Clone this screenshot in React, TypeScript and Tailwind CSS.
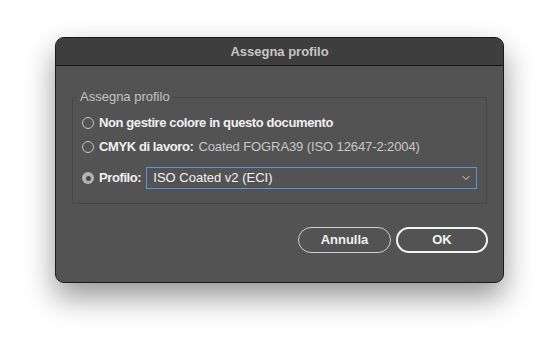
import { ChevronDown } from 'lucide-react';

function Radio({ checked }: { checked?: boolean }) {
  return checked ? (
    <span className="w-[12px] h-[12px] rounded-full bg-[#b4b4b4] flex items-center justify-center shrink-0">
      <span className="w-[5px] h-[5px] rounded-full bg-[#4a4a4a]" />
    </span>
  ) : (
    <span className="w-[12px] h-[12px] rounded-full border border-[#c4c4c4] shrink-0" />
  );
}

export default function App() {
  return (
    <div className="w-[559px] h-[356px] bg-white pl-[55px] pt-[37px] font-['Liberation_Sans',Arial,sans-serif] text-[13px]">
      <div className="w-[449px] h-[246px] rounded-[9px] border border-[#1a1a1a] bg-[#535353] overflow-hidden shadow-[0_14px_30px_rgba(0,0,0,0.42)] flex flex-col">
        {/* Title bar */}
        <div className="h-[28px] bg-[#3d3e3d] border-b border-[#151515] flex items-center justify-center shrink-0">
          <span className="font-bold text-[#c6c6c6]">Assegna profilo</span>
        </div>

        <div className="px-[16px] pt-[23px]">
          <fieldset className="border border-[#474747] rounded-[2px] pl-[9px] pr-[9px] pb-[14px]">
            <legend className="-ml-[4px] px-[2px] leading-[16px] text-[#c3c3c3]">Assegna profilo</legend>

            <div className="mt-[8px] h-[20px] flex items-center gap-[5px]">
              <Radio />
              <span className="text-[#f0f0f0] font-bold tracking-[-0.4px]">Non gestire colore in questo documento</span>
            </div>

            <div className="mt-[4px] h-[20px] flex items-center gap-[5px]">
              <Radio />
              <span className="text-[#f0f0f0] font-bold tracking-[-0.4px]">CMYK di lavoro:</span>
              <span className="text-[#c8c8c8] tracking-[-0.1px]">Coated FOGRA39 (ISO 12647-2:2004)</span>
            </div>

            <div className="mt-[10px] h-[22px] flex items-center gap-[5px]">
              <Radio checked />
              <span className="text-[#f0f0f0] font-bold tracking-[-0.4px]">Profilo:</span>
              <div className="flex-1 h-[22px] border border-[#5a93de] flex items-center pl-[6px] pr-[4px]">
                <span className="flex-1 text-[#f4f4f4]">ISO Coated v2 (ECI)</span>
                <ChevronDown size={12} strokeWidth={2} className="text-[#d8d8d8]" />
              </div>
            </div>
          </fieldset>

          <div className="mt-[23px] pr-[0px] flex justify-end gap-[5px] translate-x-[1px]">
            <button className="w-[93px] h-[26px] rounded-full border border-[#cfcfcf] text-[#f0f0f0] font-bold">
              Annulla
            </button>
            <button className="w-[92px] h-[26px] rounded-full border-2 border-[#f4f4f4] text-[#f4f4f4] font-bold">
              OK
            </button>
          </div>
        </div>
      </div>
    </div>
  );
}
